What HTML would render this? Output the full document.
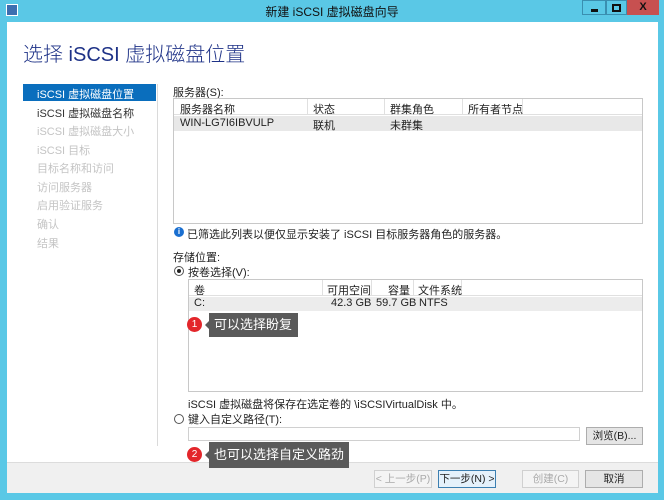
<!DOCTYPE html>
<html><head><meta charset="utf-8"><style>
*{margin:0;padding:0;box-sizing:border-box}
body{width:664px;height:500px;overflow:hidden;background:#5ac8e6;font-family:"Liberation Sans","Noto Sans CJK SC",sans-serif;font-size:11px;color:#222;position:relative}
.a{position:absolute}
.t{white-space:nowrap}
.btn{position:absolute;height:18px;border:1px solid #adadad;background:#e5e5e5;text-align:center;line-height:16px;font-size:10.5px;white-space:nowrap;overflow:hidden;padding:0}
.cb{position:absolute;top:0;height:15px}
</style></head><body>
<div class="a" style="left:6px;top:4px;width:12px;height:12px;background:#3d6fb0;border:1px solid #fff"></div>
<div class="a t" style="left:0;width:664px;top:3px;text-align:center;font-size:12px;color:#111">新建 iSCSI 虚拟磁盘向导</div>
<div class="cb" style="left:582px;width:24px;background:#5ac8e6;border:1px solid #3a8fb0"><div class="a" style="left:8px;top:8px;width:7px;height:3px;background:#111"></div></div>
<div class="cb" style="left:606px;width:21px;background:#5ac8e6;border:1px solid #3a8fb0"><div class="a" style="left:5px;top:3px;width:9px;height:8px;border:2px solid #111"></div></div>
<div class="cb" style="left:627px;width:32px;background:#c75050;color:#111;text-align:center;font-weight:bold;font-size:11px;line-height:14px">X</div>
<div class="a" style="left:7px;top:22px;width:651px;height:440px;background:#fff"></div>
<div class="a" style="left:7px;top:462px;width:651px;height:31px;background:#f0f0f0;border-top:1px solid #dcdcdc"></div>
<div class="a t" style="left:23px;top:38px;font-size:20px;color:#1e3287;font-weight:300">选择 iSCSI 虚拟磁盘位置</div>
<div class="a" style="left:23px;top:84px;width:133px;height:17px;background:#0a6ebd"></div>
<div class="a" style="left:157px;top:84px;width:1px;height:362px;background:#dadada"></div>
<div class="a t" style="left:37px;top:86px;color:#fff">iSCSI 虚拟磁盘位置</div>
<div class="a t" style="left:37px;top:105px;color:#333">iSCSI 虚拟磁盘名称</div>
<div class="a t" style="left:37px;top:123px;color:#c4c4c4">iSCSI 虚拟磁盘大小</div>
<div class="a t" style="left:37px;top:142px;color:#c4c4c4">iSCSI 目标</div>
<div class="a t" style="left:37px;top:160px;color:#c4c4c4">目标名称和访问</div>
<div class="a t" style="left:37px;top:179px;color:#c4c4c4">访问服务器</div>
<div class="a t" style="left:37px;top:197px;color:#c4c4c4">启用验证服务</div>
<div class="a t" style="left:37px;top:216px;color:#c4c4c4">确认</div>
<div class="a t" style="left:37px;top:235px;color:#c4c4c4">结果</div>
<div class="a t" style="left:173px;top:84px">服务器(S):</div>
<div class="a" style="left:173px;top:98px;width:470px;height:126px;border:1px solid #c8c8c8"></div>
<div class="a" style="left:174px;top:99px;width:468px;height:16px;border-bottom:1px solid #e0e0e0"></div>
<div class="a" style="left:307px;top:99px;width:1px;height:16px;background:#e0e0e0"></div>
<div class="a" style="left:384px;top:99px;width:1px;height:16px;background:#e0e0e0"></div>
<div class="a" style="left:462px;top:99px;width:1px;height:16px;background:#e0e0e0"></div>
<div class="a" style="left:522px;top:99px;width:1px;height:16px;background:#e0e0e0"></div>
<div class="a t" style="left:180px;top:101px">服务器名称</div>
<div class="a t" style="left:313px;top:101px">状态</div>
<div class="a t" style="left:390px;top:101px">群集角色</div>
<div class="a t" style="left:468px;top:101px">所有者节点</div>
<div class="a" style="left:174px;top:116px;width:468px;height:15px;background:#e8e8e8"></div>
<div class="a t" style="left:180px;top:117px">WIN-LG7I6IBVULP</div>
<div class="a t" style="left:313px;top:117px">联机</div>
<div class="a t" style="left:390px;top:117px">未群集</div>
<div class="a" style="left:174px;top:227px;width:10px;height:10px;border-radius:50%;background:#1a6fd0;color:#fff;font-size:8px;text-align:center;line-height:10px;font-weight:bold">i</div>
<div class="a t" style="left:187px;top:226px">已筛选此列表以便仅显示安装了 iSCSI 目标服务器角色的服务器。</div>
<div class="a t" style="left:173px;top:249px">存储位置:</div>
<div class="a" style="left:174px;top:266px;width:10px;height:10px;border-radius:50%;border:1px solid #555"><div class="a" style="left:2px;top:2px;width:4px;height:4px;border-radius:50%;background:#222"></div></div>
<div class="a t" style="left:188px;top:264px">按卷选择(V):</div>
<div class="a" style="left:188px;top:279px;width:455px;height:113px;border:1px solid #c8c8c8"></div>
<div class="a" style="left:189px;top:280px;width:453px;height:16px;border-bottom:1px solid #e0e0e0"></div>
<div class="a" style="left:322px;top:280px;width:1px;height:16px;background:#e0e0e0"></div>
<div class="a" style="left:371px;top:280px;width:1px;height:16px;background:#e0e0e0"></div>
<div class="a" style="left:413px;top:280px;width:1px;height:16px;background:#e0e0e0"></div>
<div class="a" style="left:461px;top:280px;width:1px;height:16px;background:#e0e0e0"></div>
<div class="a t" style="left:194px;top:282px">卷</div>
<div class="a t" style="left:327px;top:282px">可用空间</div>
<div class="a t" style="left:388px;top:282px">容量</div>
<div class="a t" style="left:418px;top:282px">文件系统</div>
<div class="a" style="left:189px;top:297px;width:453px;height:14px;background:#ececec"></div>
<div class="a t" style="left:194px;top:297px">C:</div>
<div class="a t" style="left:331px;top:297px">42.3 GB</div>
<div class="a t" style="left:376px;top:297px">59.7 GB</div>
<div class="a t" style="left:419px;top:297px">NTFS</div>
<div class="a t" style="left:188px;top:396px">iSCSI 虚拟磁盘将保存在选定卷的 \iSCSIVirtualDisk 中。</div>
<div class="a" style="left:174px;top:414px;width:10px;height:10px;border-radius:50%;border:1px solid #555"></div>
<div class="a t" style="left:188px;top:411px">键入自定义路径(T):</div>
<div class="a" style="left:188px;top:427px;width:392px;height:14px;border:1px solid #d0d0d0"></div>
<div class="btn" style="left:586px;top:427px;width:57px">浏览(B)...</div>
<div class="a" style="left:187px;top:317px;width:15px;height:15px;border-radius:50%;background:#e3262b;color:#fff;font-size:10px;text-align:center;line-height:15px">1</div>
<div class="a" style="left:200px;top:320px;width:0;height:0;border:5px solid transparent;border-right-color:#5a5a5a"></div>
<div class="a t" style="left:209px;top:313px;width:89px;height:24px;background:#5a5a5a;color:#fff;font-size:13px;line-height:24px;padding-left:5px">可以选择盼复</div>
<div class="a" style="left:187px;top:447px;width:15px;height:15px;border-radius:50%;background:#e3262b;color:#fff;font-size:10px;text-align:center;line-height:15px">2</div>
<div class="a" style="left:200px;top:450px;width:0;height:0;border:5px solid transparent;border-right-color:#5a5a5a"></div>
<div class="a t" style="left:209px;top:442px;width:140px;height:26px;background:#5a5a5a;color:#fff;font-size:13px;line-height:26px;padding-left:5px">也可以选择自定义路劲</div>
<div class="btn" style="left:374px;top:470px;width:58px;color:#aaa;background:#f4f4f4;border-color:#d0d0d0">&lt; 上一步(P)</div>
<div class="btn" style="left:438px;top:470px;width:58px;border-color:#3c7fb1;background:#e5f1fb">下一步(N) &gt;</div>
<div class="btn" style="left:522px;top:470px;width:57px;color:#aaa;background:#f4f4f4;border-color:#d0d0d0">创建(C)</div>
<div class="btn" style="left:585px;top:470px;width:58px">取消</div>
</body></html>
